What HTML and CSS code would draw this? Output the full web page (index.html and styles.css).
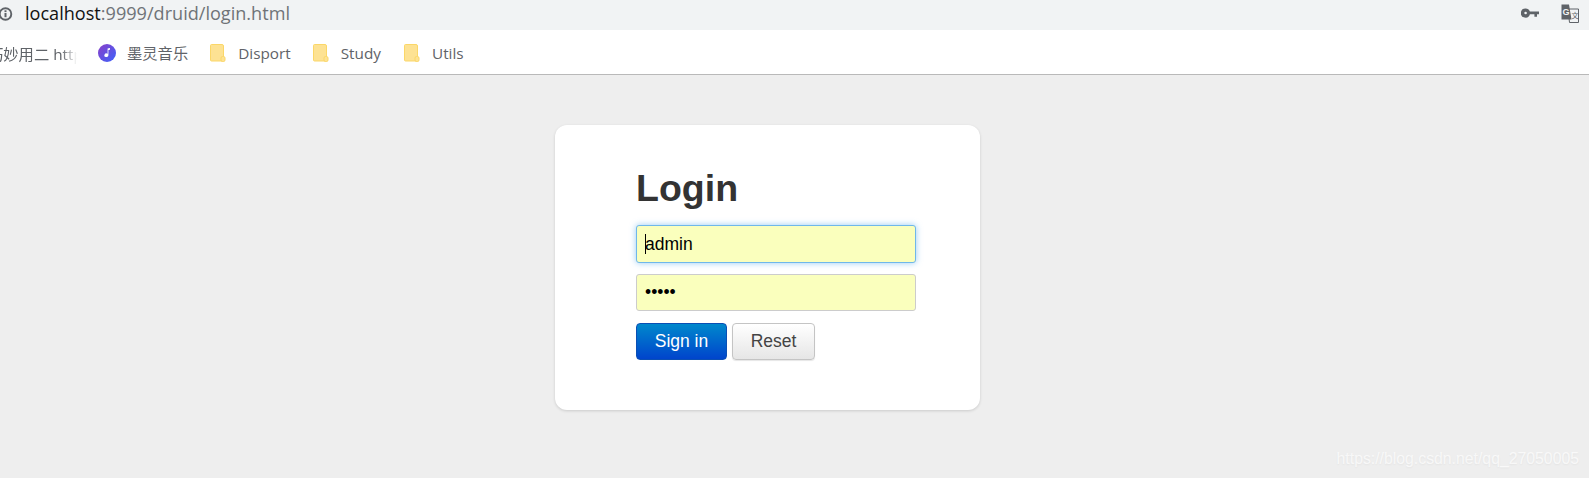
FILE: index.html
```html
<!DOCTYPE html>
<html lang="zh">
<head>
<meta charset="utf-8">
<title>druid login</title>
<link rel="stylesheet" href="styles.css">
</head>
<body>
<header class="toolbar">
  <svg class="info-icon" width="14" height="14" viewBox="0 0 14 14"><circle cx="5.500" cy="7" r="5.800" fill="none" stroke="#5f6368" stroke-width="1.900"/><rect x="4.500" y="6" width="2" height="4.200" fill="#5f6368"/><rect x="4.500" y="3.300" width="2" height="1.800" fill="#5f6368"/></svg>
  <div class="url"><span class="url-host">localhost</span><span class="url-path">:9999/druid/login.html</span></div>
  <svg class="key-icon" width="18" height="10" viewBox="0 0 18 10"><path d="M4.600 0.400a4.600 4.600 0 0 1 4.300 3H18v2.800h-2v2.600h-2.600V6.200H8.900a4.600 4.600 0 1 1-4.300-5.800zm0 3.300a1.300 1.300 0 1 0 0 2.600 1.300 1.300 0 0 0 0-2.600z" fill="#5f6368"/></svg>
  <svg class="translate-icon" width="18" height="19" viewBox="0 0 18 19"><path d="M7 5h10.500v13.500H8.500z" fill="#f1f3f4" stroke="#5f6368"/><path d="M0.500 0.500h7.500l2.500 15H0.500z" fill="#5f6368"/><text x="1.500" y="11" class="translate-g">G</text><text x="10.500" y="14" class="translate-x">文</text></svg>
</header>
<nav class="bookmarks">
  <div class="clipped"><span class="clipped-text">巧妙用二 https://</span></div>
  <div class="bookmark bookmark-music">
    <svg width="18" height="18" viewBox="0 0 18 18"><defs><linearGradient id="music" x1="0" y1="0" x2="1" y2="1"><stop offset="0" stop-color="#8a3fc8"/><stop offset="1" stop-color="#3d62fb"/></linearGradient></defs><circle cx="9" cy="9" r="9" fill="url(#music)"/><path d="M9.600 4.500l2.400-.6v1.800l-1.600.4v5.200a2 1.800 0 1 1-.8-1.500z" fill="#fff"/></svg>
    <span class="bookmark-label">墨灵音乐</span>
  </div>
  <div class="bookmark bookmark-disport">
    <svg class="folder" width="16" height="19" viewBox="0 0 16 19"><path d="M1.500.5h10.500a1.500 1.500 0 0 1 1.500 1.500v15h-12a1 1 0 0 1-1-1V1.500a1 1 0 0 1 1-1z" fill="#fde293" stroke="#fbd768"/><rect x="11" y="12.500" width="4" height="5" rx="1.500" fill="#fde293" stroke="#fbd768"/></svg>
    <span class="bookmark-label">Disport</span>
  </div>
  <div class="bookmark bookmark-study">
    <svg class="folder" width="16" height="19" viewBox="0 0 16 19"><path d="M1.500.5h10.500a1.500 1.500 0 0 1 1.500 1.500v15h-12a1 1 0 0 1-1-1V1.500a1 1 0 0 1 1-1z" fill="#fde293" stroke="#fbd768"/><rect x="11" y="12.500" width="4" height="5" rx="1.500" fill="#fde293" stroke="#fbd768"/></svg>
    <span class="bookmark-label">Study</span>
  </div>
  <div class="bookmark">
    <svg class="folder" width="16" height="19" viewBox="0 0 16 19"><path d="M1.500.5h10.500a1.500 1.500 0 0 1 1.500 1.500v15h-12a1 1 0 0 1-1-1V1.500a1 1 0 0 1 1-1z" fill="#fde293" stroke="#fbd768"/><rect x="11" y="12.500" width="4" height="5" rx="1.500" fill="#fde293" stroke="#fbd768"/></svg>
    <span class="bookmark-label">Utils</span>
  </div>
</nav>
<main class="page">
  <form class="card">
    <h1 class="title">Login</h1>
    <div class="field">
      <input class="input input-focus" type="text" value="admin">
      <span class="caret"></span>
    </div>
    <input class="input input-password" type="password" value="12345">
    <div class="actions">
      <button class="btn btn-primary" type="button">Sign in</button>
      <button class="btn btn-default" type="button">Reset</button>
    </div>
  </form>
</main>
<div class="watermark">https://blog.csdn.net/qq_27050005</div>
</body>
</html>
```
FILE: styles.css
```css
* { box-sizing: border-box; }
html, body { margin: 0; height: 100%; }
body {
  position: relative;
  height: 478px;
  overflow: hidden;
  background: #eee;
  font-family: "Liberation Sans", Arial, sans-serif;
}
.toolbar {
  display: flex;
  align-items: center;
  height: 30px;
  background: #f1f3f4;
}
.info-icon { flex: none; margin: -3px 11px 0 0; }
.url {
  flex: 1;
  font-family: "Open Sans", "Noto Sans", sans-serif;
  font-size: 18.1px;
  line-height: 24px;
  margin-top: -5px;
}
.url-host { color: #111; }
.url-path { color: #6f7378; }
.key-icon { flex: none; margin: -5px 22px 0 0; }
.translate-icon { flex: none; margin: -3px 10px 0 0; }
.translate-g { font: bold 9px "Liberation Sans", sans-serif; fill: #f1f3f4; }
.translate-x { font: 7px "Noto Sans CJK SC", sans-serif; fill: #5f6368; }
.bookmarks {
  display: flex;
  align-items: center;
  height: 45px;
  padding-top: 2px;
  background: #fff;
  border-bottom: 1px solid #b9b9b9;
  font-family: "Open Sans", "Noto Sans", "Noto Sans CJK SC", sans-serif;
  font-size: 15.3px;
  color: #5f6368;
}
.clipped {
  flex: none;
  width: 77px;
  overflow: hidden;
  white-space: nowrap;
  margin-right: 21px;
  -webkit-mask-image: linear-gradient(to right, #000 80%, transparent);
  mask-image: linear-gradient(to right, #000 80%, transparent);
}
.clipped-text { display: block; margin-left: -12px; }
.bookmark {
  display: flex;
  align-items: center;
  flex: none;
}
.bookmark-music { margin-right: 22px; }
.bookmark-disport { margin-right: 22px; }
.bookmark-study { margin-right: 23px; }
.bookmark-label { margin-left: 11px; line-height: 20px; }
.folder + .bookmark-label { margin-left: 12px; }
.page { padding: 50px 0 0 555px; }
.card {
  width: 425px;
  height: 285px;
  padding: 38px 0 0 81px;
  background: #fff;
  border-radius: 12px;
  box-shadow: 0 1px 3px rgba(0, 0, 0, .15);
}
.title {
  margin: 0 0 12px;
  font-size: 37.5px;
  line-height: 50px;
  font-weight: bold;
  color: #333;
}
.field { position: relative; width: 280px; margin-bottom: 11px; }
.input {
  display: block;
  width: 280px;
  height: 37px;
  padding: 0 8px;
  background: #faffbd;
  border: 1px solid #ccc;
  border-radius: 3px;
  font-family: "Liberation Sans", Arial, sans-serif;
  font-size: 17.5px;
  color: #000;
  outline: none;
}
.input-focus {
  height: 38px;
  border-color: #6fb7ea;
  box-shadow: 0 0 6px rgba(82, 168, 236, .6);
}
.caret {
  position: absolute;
  left: 9px;
  top: 9px;
  width: 1px;
  height: 20px;
  background: #000;
}
.actions { display: flex; gap: 5px; margin-top: 12px; }
.btn {
  height: 37px;
  padding: 0;
  border-radius: 4px;
  font-family: "Liberation Sans", Arial, sans-serif;
  font-size: 17.5px;
}
.btn-primary {
  width: 91px;
  color: #fff;
  background: linear-gradient(#0088cc, #0044cc);
  border: 1px solid #0a4fb5;
}
.btn-default {
  width: 83px;
  color: #444;
  background: linear-gradient(#fff, #e6e6e6);
  border: 1px solid #c4c4c4;
  box-shadow: 0 1px 1px rgba(0, 0, 0, .1);
}
.watermark {
  position: absolute;
  right: 10px;
  bottom: 10px;
  font-size: 15.800px;
  color: rgba(255, 255, 255, .7);
  text-shadow: 0 1px 2px rgba(0, 0, 0, .05);
}
```
